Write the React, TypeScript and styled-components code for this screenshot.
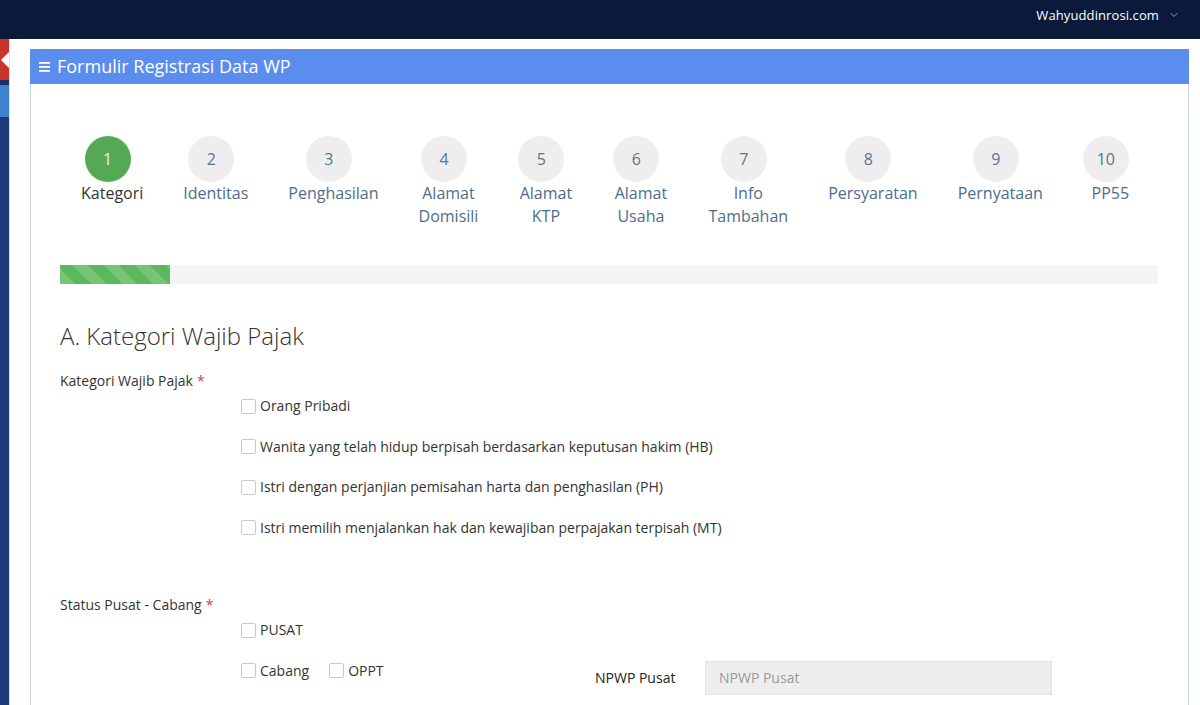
import React from 'react';
import styled, { createGlobalStyle } from 'styled-components';
import { ChevronDown } from 'lucide-react';

const GlobalStyle = createGlobalStyle`
  html, body {
    margin: 0;
    padding: 0;
    background: #fff;
    font-family: 'Open Sans', 'Noto Sans', sans-serif;
    color: #333;
    overflow: hidden;
  }
  * {
    box-sizing: border-box;
  }
`;

const Page = styled.div`
  width: 1200px;
  height: 705px;
  display: flex;
  flex-direction: column;
`;

const TopBar = styled.header`
  height: 39px;
  flex: none;
  background: #0b1a3a;
  display: flex;
  align-items: center;
  justify-content: flex-end;
  padding: 0 20px 10px 0;
  color: #fff;
  font-size: 13px;
  gap: 9px;
`;

const UserName = styled.span`
  letter-spacing: 0.1px;
`;

const Body = styled.div`
  flex: 1;
  display: flex;
  min-height: 0;
`;

const Sidebar = styled.aside`
  width: 10px;
  flex: none;
  display: flex;
  flex-direction: column;
  background: #1b3a80;
  border-right: 1px solid #d3e3f6;
`;

const SideToggle = styled.div`
  height: 41px;
  background: #c9342b;
  display: flex;
  align-items: center;
  justify-content: flex-end;
`;

const SideBlock = styled.div<{ $h: number; $bg: string }>`
  height: ${(p) => p.$h}px;
  background: ${(p) => p.$bg};
`;

const Main = styled.main`
  flex: 1;
  padding: 10px 11px 0 20px;
  min-width: 0;
`;

const Panel = styled.section`
  border: 1px solid #c7d5f2;
  border-bottom: none;
  height: 100%;
`;

const PanelHeader = styled.div`
  height: 35px;
  background: #5b8def;
  color: #fff;
  display: flex;
  align-items: center;
  gap: 6px;
  padding: 0 0 1px 9px;
  font-size: 18px;
  margin: -1px -1px 0;
`;

const PanelBody = styled.div`
  padding: 52px 30px 0 29px;
`;

const Steps = styled.div`
  display: flex;
  justify-content: space-between;
  padding: 0 20px 0 21px;
`;

const Step = styled.div`
  display: flex;
  flex-direction: column;
  align-items: center;
`;

const Circle = styled.div<{ $active?: boolean }>`
  width: 46px;
  height: 46px;
  border-radius: 50%;
  margin-right: 9px;
  display: flex;
  align-items: center;
  justify-content: center;
  font-size: 16px;
  background: ${(p) => (p.$active ? '#55a954' : '#eeeeee')};
  color: ${(p) => (p.$active ? '#e6f3e4' : '#587593')};
`;

const StepLabel = styled.div<{ $active?: boolean }>`
  font-size: 16px;
  line-height: 23px;
  text-align: center;
  color: ${(p) => (p.$active ? '#333' : '#4e6d8d')};
`;

const Progress = styled.div`
  margin-top: 37px;
  height: 19px;
  background: #f4f4f4;
`;

const ProgressFill = styled.div`
  height: 100%;
  background-color: #5cb85c;
  background-image: repeating-linear-gradient(
    45deg,
    rgba(255, 255, 255, 0.17) 0 11px,
    transparent 11px 22px
  );
`;

const Heading = styled.h2`
  margin: 39px 0 0;
  font-size: 24px;
  font-weight: 300;
  line-height: 26px;
  color: #333;
`;

const FieldLabel = styled.div<{ $top: number }>`
  margin-top: ${(p) => p.$top}px;
  font-size: 14px;
  line-height: 20px;
  color: #333;
`;

const Req = styled.span`
  color: #e0403a;
  margin-left: 4px;
`;

const Options = styled.div`
  padding-left: 181px;
  margin-top: 5px;
  display: flex;
  flex-direction: column;
  gap: 20.5px;
`;

const OptionRow = styled.div`
  display: flex;
  align-items: flex-start;
`;

const CheckGroup = styled.div<{ $w?: number }>`
  display: flex;
  gap: 20px;
  width: ${(p) => (p.$w ? `${p.$w}px` : 'auto')};
`;

const Check = styled.label`
  display: flex;
  align-items: center;
  gap: 4px;
  font-size: 14px;
  line-height: 20px;
  color: #333;
`;

const Box = styled.span`
  width: 15px;
  height: 15px;
  border: 1px solid #c9c9c9;
  border-radius: 2px;
  background: #fff;
`;

const InputLabel = styled.span`
  width: 110px;
  font-size: 14px;
  line-height: 34px;
  color: #222;
`;

const Input = styled.input`
  width: 347px;
  height: 34px;
  border: 1px solid #e2e2e2;
  background: #eeeeee;
  padding: 0 13px;
  font-family: inherit;
  font-size: 14px;
  color: #555;
  outline: none;
  &::placeholder {
    color: #9a9a9a;
  }
`;

const steps = [
  ['Kategori'],
  ['Identitas'],
  ['Penghasilan'],
  ['Alamat', 'Domisili'],
  ['Alamat', 'KTP'],
  ['Alamat', 'Usaha'],
  ['Info', 'Tambahan'],
  ['Persyaratan'],
  ['Pernyataan'],
  ['PP55'],
];

const kategori = [
  'Orang Pribadi',
  'Wanita yang telah hidup berpisah berdasarkan keputusan hakim (HB)',
  'Istri dengan perjanjian pemisahan harta dan penghasilan (PH)',
  'Istri memilih menjalankan hak dan kewajiban perpajakan terpisah (MT)',
];

const Checkbox = ({ label }: { label: string }) => (
  <Check>
    <Box />
    {label}
  </Check>
);

const App = () => {
  return (
    <Page>
      <GlobalStyle />
      <TopBar>
        <UserName>Wahyuddinrosi.com</UserName>
        <ChevronDown size={12} strokeWidth={1.5} color="#c9d0e0" />
      </TopBar>
      <Body>
        <Sidebar>
          <SideToggle>
            <svg width="8" height="16" viewBox="0 0 8 16">
              <polygon points="8,0 8,16 0,8" fill="#fff" />
            </svg>
          </SideToggle>
          <SideBlock $h={5} $bg="#172f6b" />
          <SideBlock $h={32} $bg="#3f80cf" />
        </Sidebar>
        <Main>
          <Panel>
            <PanelHeader>
              <svg width="12" height="11" viewBox="0 0 12 11">
                <rect x="0" y="1" width="11" height="1.8" fill="#fff" />
                <rect x="0" y="5" width="11" height="1.8" fill="#fff" />
                <rect x="0" y="9" width="11" height="1.8" fill="#fff" />
              </svg>
              Formulir Registrasi Data WP
            </PanelHeader>
            <PanelBody>
              <Steps>
                {steps.map((lines, i) => (
                  <Step key={i}>
                    <Circle $active={i === 0}>{i + 1}</Circle>
                    <StepLabel $active={i === 0}>
                      {lines.map((l) => (
                        <div key={l}>{l}</div>
                      ))}
                    </StepLabel>
                  </Step>
                ))}
              </Steps>

              <Progress>
                <ProgressFill style={{ width: '10%' }} />
              </Progress>

              <Heading>A. Kategori Wajib Pajak</Heading>

              <FieldLabel $top={22}>
                Kategori Wajib Pajak<Req>*</Req>
              </FieldLabel>
              <Options>
                {kategori.map((k) => (
                  <OptionRow key={k}>
                    <Checkbox label={k} />
                  </OptionRow>
                ))}
              </Options>

              <FieldLabel $top={57.5}>
                Status Pusat - Cabang<Req>*</Req>
              </FieldLabel>
              <Options>
                <OptionRow>
                  <Checkbox label="PUSAT" />
                </OptionRow>
                <OptionRow>
                  <CheckGroup $w={354}>
                    <Checkbox label="Cabang" />
                    <Checkbox label="OPPT" />
                  </CheckGroup>
                  <InputLabel>NPWP Pusat</InputLabel>
                  <Input placeholder="NPWP Pusat" readOnly />
                </OptionRow>
              </Options>
            </PanelBody>
          </Panel>
        </Main>
      </Body>
    </Page>
  );
};

export default App;
